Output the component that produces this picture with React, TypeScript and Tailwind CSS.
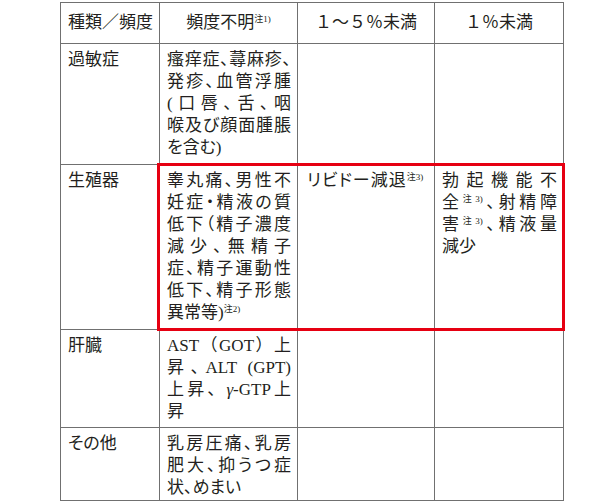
import React from "react";

// 副作用の頻度表（赤枠は生殖器の行を囲む）

type Cell = React.ReactNode[];

const Sup = ({ children }: { children: React.ReactNode }) => (
  <sup className="text-[9px] relative -top-[6px] tracking-normal">{children}</sup>
);

function Lines({ lines }: { lines: Cell }) {
  return (
    <div>
      {lines.map((line, i) => (
        <div
          key={i}
          className={
            i < lines.length - 1
              ? "whitespace-nowrap text-justify [text-align-last:justify]"
              : "whitespace-nowrap text-left"
          }
        >
          {line}
        </div>
      ))}
    </div>
  );
}

const rows: { label: string; h: string; cells: [Cell, Cell, Cell] }[] = [
  {
    label: "過敏症",
    h: "h-[121px]",
    cells: [
      ["瘙痒症、蕁麻疹、", "発疹、血管浮腫", "(口唇、舌、咽", "喉及び顔面腫脹", "を含む)"],
      [],
      [],
    ],
  },
  {
    label: "生殖器",
    h: "h-[165px]",
    cells: [
      [
        "睾丸痛、男性不",
        "妊症・精液の質",
        "低下（精子濃度",
        "減少、無精子",
        "症、精子運動性",
        "低下、精子形態",
        <>
          異常等)<Sup>注2)</Sup>
        </>,
      ],
      [
        <span className="tracking-[1px]">
          リビドー減退<Sup>注3)</Sup>
        </span>,
      ],
      [
        "勃起機能不",
        <>
          全<Sup>注3)</Sup>、射精障
        </>,
        <>
          害<Sup>注3)</Sup>、精液量
        </>,
        "減少",
      ],
    ],
  },
  {
    label: "肝臓",
    h: "h-[98px]",
    cells: [
      [
        <span className="[font-feature-settings:normal]">AST（GOT）上</span>,
        "昇、ALT (GPT)",
        <>
          上昇、 <i>γ</i>-GTP上
        </>,
        "昇",
      ],
      [],
      [],
    ],
  },
  {
    label: "その他",
    h: "h-[73px]",
    cells: [["乳房圧痛、乳房", "肥大、抑うつ症", "状、めまい"], [], []],
  },
];

export default function App() {
  return (
    <div className="w-[600px] h-[501px] bg-white overflow-hidden pt-[2px] pl-[60px] text-[#231f20] font-['Liberation_Serif','Noto_Sans_CJK_JP',serif] text-[17px] leading-[22px] [font-feature-settings:'palt']">
      <div className="relative w-[503px]">
        <table className="table-fixed border-collapse w-[503px] border border-[#8a8a8a]">
          <colgroup>
            <col className="w-[99px]" />
            <col className="w-[138px]" />
            <col className="w-[137px]" />
            <col className="w-[129px]" />
          </colgroup>
          <thead className="[font-feature-settings:normal]">
            <tr className="h-[41px]">
              <th className="border border-[#707070] font-normal text-left px-[7px] align-middle whitespace-nowrap">
                種類／頻度
              </th>
              <th className="border border-[#707070] font-normal text-center align-middle whitespace-nowrap">
                頻度不明<Sup>注1)</Sup>
              </th>
              <th className="border border-[#707070] font-normal text-center align-middle whitespace-nowrap">
                １～５％未満
              </th>
              <th className="border border-[#707070] font-normal text-center align-middle whitespace-nowrap">
                １％未満
              </th>
            </tr>
          </thead>
          <tbody>
            {rows.map((r) => (
              <tr key={r.label} className={r.h}>
                <td className="border border-[#707070] align-top px-[7px] pt-[5px]">{r.label}</td>
                <td className="border border-[#707070] align-top pl-[7px] pr-[6px] pt-[5px]">
                  <Lines lines={r.cells[0]} />
                </td>
                <td className="border border-[#707070] align-top pl-[9px] pr-[6px] pt-[5px]">
                  <Lines lines={r.cells[1]} />
                </td>
                <td className="border border-[#707070] align-top pl-[7px] pr-[6px] pt-[5px]">
                  <Lines lines={r.cells[2]} />
                </td>
              </tr>
            ))}
          </tbody>
        </table>
        {/* 赤枠のハイライト */}
        <div className="absolute left-[97px] top-[161px] w-[408px] h-[168px] border-[3px] border-[#e60012] pointer-events-none" />
      </div>
    </div>
  );
}
